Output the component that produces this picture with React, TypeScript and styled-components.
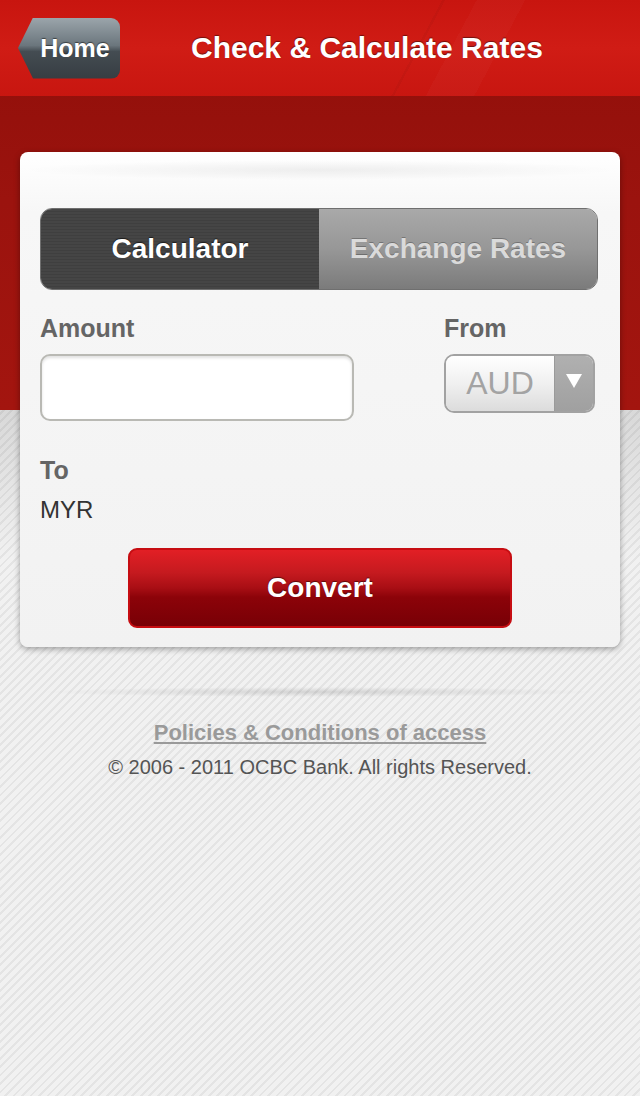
import React from 'react';
import styled, { createGlobalStyle } from 'styled-components';

const GlobalStyle = createGlobalStyle`
  html, body {
    margin: 0;
    padding: 0;
  }
  body {
    font-family: "Liberation Sans", Arial, Helvetica, sans-serif;
    background: #ececec;
  }
`;

const Page = styled.div`
  width: 640px;
  min-height: 1096px;
  background:
    linear-gradient(to bottom, transparent 0, transparent 410px, rgba(0, 0, 0, 0.1) 410px, rgba(0, 0, 0, 0) 560px),
    linear-gradient(to bottom, #8f0e09 0, #9b130e 200px, #a3150f 410px, transparent 410px),
    repeating-linear-gradient(-45deg, #f1f1f1 0, #f1f1f1 4px, #e4e4e4 4px, #e4e4e4 6px);
  overflow: hidden;
`;

const Header = styled.header`
  height: 96px;
  display: flex;
  align-items: center;
  gap: 71px;
  padding-left: 18px;
  box-sizing: border-box;
  background:
    linear-gradient(118deg, transparent 0, transparent 64%, rgba(0, 0, 0, 0.04) 64%, rgba(0, 0, 0, 0.04) 64.4%, transparent 64.4%, transparent 69%, rgba(255, 255, 255, 0.025) 69%, rgba(255, 255, 255, 0.025) 76%, transparent 76%),
    linear-gradient(to bottom, #c8150f 0, #d01c15 50%, #c81610 100%);
`;

const HomeButton = styled.button`
  width: 102px;
  height: 61px;
  border: none;
  padding: 0 0 0 12px;
  border-radius: 0 9px 9px 0;
  clip-path: polygon(0 50%, 15px 0, 100% 0, 100% 100%, 15px 100%);
  background: linear-gradient(to bottom, #9ba5ab 0, #6b767d 45%, #444c52 55%, #363d42 100%);
  color: #fff;
  font-family: inherit;
  font-size: 25px;
  font-weight: bold;
  text-shadow: 0 -1px 1px rgba(0, 0, 0, 0.5);
`;

const Title = styled.h1`
  margin: 0;
  color: #fff;
  font-size: 30px;
  font-weight: bold;
  text-shadow: 0 -1px 1px rgba(0, 0, 0, 0.45);
`;

const Card = styled.section`
  margin: 56px 20px 0;
  padding: 56px 20px 19px;
  border-radius: 8px;
  background:
    radial-gradient(ellipse 50% 10px at 50% 18px, rgba(0, 0, 0, 0.06), transparent),
    linear-gradient(to bottom, #ffffff 0, #f7f7f7 60px, #f2f2f2 100%);
  box-shadow: 0 2px 6px rgba(0, 0, 0, 0.35);
`;

const Segmented = styled.div`
  display: grid;
  grid-template-columns: 1fr 1fr;
  height: 82px;
  margin-right: 2px;
  border-radius: 12px;
  overflow: hidden;
  border: 1px solid #6f6f6f;
  box-sizing: border-box;
`;

const Segment = styled.div<{ $active?: boolean }>`
  display: flex;
  align-items: center;
  justify-content: center;
  font-size: 28px;
  font-weight: bold;
  color: ${(p) => (p.$active ? '#ffffff' : '#dadada')};
  text-shadow: ${(p) => (p.$active ? '0 -1px 1px rgba(0,0,0,0.6)' : '0 -1px 0 rgba(0,0,0,0.25)')};
  background: ${(p) =>
    p.$active
      ? 'repeating-linear-gradient(0deg, #454545 0, #454545 2px, #3f3f3f 2px, #3f3f3f 3px)'
      : 'linear-gradient(to bottom, #a9a9a9 0, #979797 50%, #7b7b7b 100%)'};
`;

const FormRow = styled.div`
  display: grid;
  grid-template-columns: 314px 151px;
  column-gap: 90px;
  margin-top: 24px;
`;

const Field = styled.div`
  display: flex;
  flex-direction: column;
`;

const Label = styled.div`
  font-size: 25px;
  line-height: 28px;
  font-weight: bold;
  color: #656565;
  margin-bottom: 12px;
`;

const AmountInput = styled.input`
  height: 67px;
  box-sizing: border-box;
  border: 2px solid #b9b9b4;
  border-radius: 10px;
  background: #fff;
  box-shadow: inset 0 2px 3px rgba(0, 0, 0, 0.12);
  font-family: inherit;
  font-size: 28px;
  padding: 0 12px;
  outline: none;
`;

const Select = styled.div`
  display: flex;
  height: 59px;
  border: 2px solid #a2a2a2;
  border-radius: 10px;
  overflow: hidden;
  box-sizing: border-box;
`;

const SelectValue = styled.div`
  flex: 1;
  display: flex;
  align-items: center;
  justify-content: center;
  font-size: 32px;
  color: #a3a3a3;
  background: linear-gradient(to bottom, #ffffff 0, #f0f0f0 50%, #dcdcdc 100%);
`;

const SelectArrow = styled.div`
  width: 39px;
  display: flex;
  align-items: center;
  justify-content: center;
  padding-bottom: 6px;
  box-sizing: border-box;
  background: linear-gradient(to bottom, #b0b0b0, #a0a0a0);
  border-left: 1px solid #9a9a9a;
`;

const ToBlock = styled.div`
  margin-top: 35px;
`;

const Value = styled.div`
  font-size: 24px;
  line-height: 28px;
  color: #333;
`;

const ConvertButton = styled.button`
  display: block;
  width: 384px;
  height: 80px;
  margin: 24px auto 0;
  border: 2px solid #c60d12;
  border-radius: 9px;
  background: linear-gradient(to bottom, #e21f25 0, #c51a1f 30%, #a80e14 50%, #8c0309 62%, #780006 100%);
  color: #fff;
  font-family: inherit;
  font-size: 28px;
  font-weight: bold;
  text-shadow: 0 -1px 1px rgba(0, 0, 0, 0.5);
`;

const Footer = styled.footer`
  display: flex;
  flex-direction: column;
  align-items: center;
  padding-top: 40px;
`;

const FooterShadow = styled.div`
  width: 560px;
  height: 10px;
  background: radial-gradient(ellipse 50% 5px at 50% 50%, rgba(0, 0, 0, 0.12), transparent);
`;

const PolicyLink = styled.a`
  margin-top: 23px;
  font-size: 22px;
  font-weight: bold;
  color: #9a9a9a;
  text-decoration: underline;
`;

const Copyright = styled.div`
  margin-top: 10px;
  font-size: 20px;
  color: #555;
`;

export default function App() {
  return (
    <>
      <GlobalStyle />
      <Page>
        <Header>
          <HomeButton>Home</HomeButton>
          <Title>Check &amp; Calculate Rates</Title>
        </Header>
        <Card>
          <Segmented>
            <Segment $active>Calculator</Segment>
            <Segment>Exchange Rates</Segment>
          </Segmented>
          <FormRow>
            <Field>
              <Label>Amount</Label>
              <AmountInput type="text" />
            </Field>
            <Field>
              <Label>From</Label>
              <Select>
                <SelectValue>AUD</SelectValue>
                <SelectArrow>
                  <svg width="18" height="16" viewBox="0 0 18 16">
                    <path d="M1 1 H17 L9 15 Z" fill="#fff" />
                  </svg>
                </SelectArrow>
              </Select>
            </Field>
          </FormRow>
          <ToBlock>
            <Label>To</Label>
            <Value>MYR</Value>
          </ToBlock>
          <ConvertButton>Convert</ConvertButton>
        </Card>
        <Footer>
          <FooterShadow />
          <PolicyLink href="#">Policies &amp; Conditions of access</PolicyLink>
          <Copyright>© 2006 - 2011 OCBC Bank. All rights Reserved.</Copyright>
        </Footer>
      </Page>
    </>
  );
}
